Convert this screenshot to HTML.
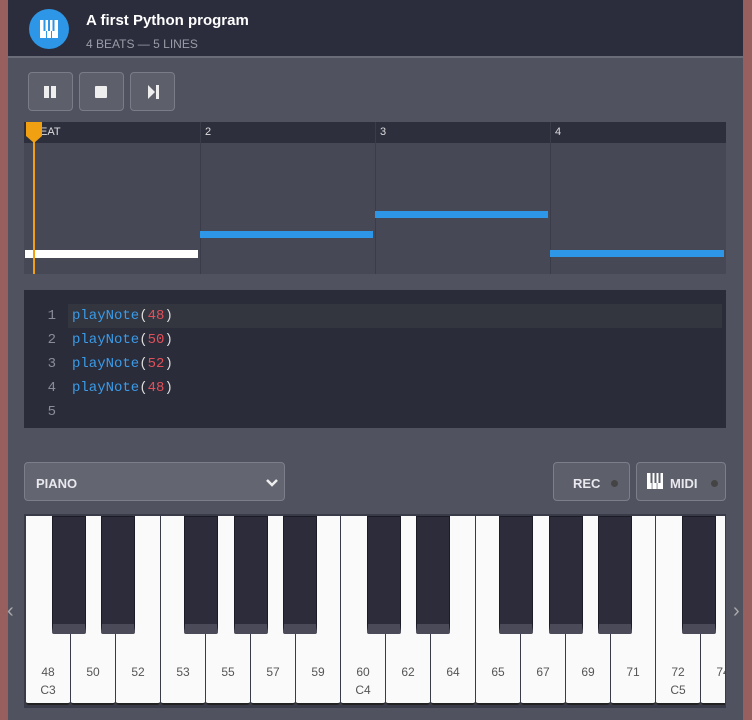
<!DOCTYPE html>
<html><head><meta charset="utf-8"><style>
*{margin:0;padding:0;box-sizing:border-box}
body{width:752px;height:720px;background:#50525f;font-family:"Liberation Sans",sans-serif;position:relative;overflow:hidden}
.a{position:absolute}
.btn{position:absolute;top:72px;width:45px;height:39px;border:1px solid #7a7c88;border-radius:4px;background:#5d5f6b}
.wk{position:absolute;top:516px;width:44px;height:189px;background:#fafafa;border-radius:0 0 3px 3px;border-bottom:2px solid #222;text-align:center;font-size:12px;color:#555;}
.wk span{position:absolute;left:0;right:0;top:147px;line-height:18px}
.bk{position:absolute;top:516px;width:34px;height:118px;background:#2d2c3b;border:1px solid #1c1c26;border-bottom:10px solid #4a4a58;border-radius:0 0 2px 2px}
.cl{position:absolute;left:0;width:100%;height:24px;line-height:24px;font-family:"Liberation Mono",monospace;font-size:14px}
.ln{position:absolute;left:18px;width:14px;text-align:right;color:#8a8c98}
.cd{position:absolute;left:48px;color:#3a9be8}
.n{color:#e0505a}.p{color:#ddd}
</style></head><body>
<div class="a" style="left:0;top:0;width:8px;height:720px;background:#985f5f"></div>
<div class="a" style="left:743px;top:0;width:9px;height:720px;background:#985f5f"></div>
<div class="a" style="left:8px;top:0;width:735px;height:58px;background:#2b2d3d;border-bottom:2px solid #6a6c78"></div>
<div class="a" style="left:29px;top:9px;width:40px;height:40px;border-radius:50%;background:#2d96e6">
<svg width="40" height="40"><rect x="11" y="11" width="18" height="18" fill="#fff"/><g fill="#2d96e6"><rect x="14.5" y="11" width="2" height="11"/><rect x="19" y="11" width="2" height="11"/><rect x="23.5" y="11" width="2" height="11"/><rect x="17" y="22" width="1" height="7"/><rect x="22" y="22" width="1" height="7"/></g></svg></div>
<div class="a" style="left:86px;top:12px;color:#fff;font-weight:bold;font-size:15px">A first Python program</div>
<div class="a" style="left:86px;top:37px;color:#9a9ca8;font-size:12px">4 BEATS — 5 LINES</div>
<div class="btn" style="left:28px"><div class="a" style="left:15px;top:13px;width:5px;height:12px;background:#eee"></div><div class="a" style="left:22px;top:13px;width:5px;height:12px;background:#eee"></div></div>
<div class="btn" style="left:79px"><div class="a" style="left:15px;top:13px;width:12px;height:12px;background:#eee;border-radius:1px"></div></div>
<div class="btn" style="left:130px"><svg class="a" style="left:17px;top:12px" width="12" height="14"><path d="M0 0L7 7L0 14Z" fill="#eee"/><rect x="8" y="0" width="3" height="14" fill="#eee"/></svg></div>
<div class="a" style="left:24px;top:122px;width:702px;height:152px;background:#464856">
<div class="a" style="left:0;top:0;width:702px;height:21px;background:#2d2f3d"></div>
<div class="a" style="left:176px;top:0;width:1px;height:152px;background:#3a3c4a"></div>
<div class="a" style="left:351px;top:0;width:1px;height:152px;background:#3a3c4a"></div>
<div class="a" style="left:526px;top:0;width:1px;height:152px;background:#3a3c4a"></div>
<div class="a" style="left:16px;top:4px;font-size:11px;color:#ddd">EAT</div>
<div class="a" style="left:181px;top:4px;font-size:11px;color:#ddd">2</div>
<div class="a" style="left:356px;top:4px;font-size:11px;color:#ddd">3</div>
<div class="a" style="left:531px;top:4px;font-size:11px;color:#ddd">4</div>
<div class="a" style="left:1px;top:128px;width:173px;height:8px;background:#fff"></div>
<div class="a" style="left:176px;top:109px;width:173px;height:7px;background:#2d96e6"></div>
<div class="a" style="left:351px;top:89px;width:173px;height:7px;background:#2d96e6"></div>
<div class="a" style="left:526px;top:128px;width:174px;height:7px;background:#2d96e6"></div>
<div class="a" style="left:9px;top:0;width:2px;height:152px;background:#f0a010"></div>
<svg class="a" style="left:2px;top:0" width="16" height="22"><path d="M0 0H16V14L8 21L0 14Z" fill="#f0a010"/></svg>
</div>
<div class="a" style="left:24px;top:290px;width:702px;height:138px;background:#2b2c3a">
<div class="a" style="left:44px;top:14px;width:654px;height:24px;background:#33353f"></div>
<div class="cl" style="top:14px"><span class="ln">1</span><span class="cd">playNote<span class="p">(</span><span class="n">48</span><span class="p">)</span></span></div>
<div class="cl" style="top:38px"><span class="ln">2</span><span class="cd">playNote<span class="p">(</span><span class="n">50</span><span class="p">)</span></span></div>
<div class="cl" style="top:62px"><span class="ln">3</span><span class="cd">playNote<span class="p">(</span><span class="n">52</span><span class="p">)</span></span></div>
<div class="cl" style="top:86px"><span class="ln">4</span><span class="cd">playNote<span class="p">(</span><span class="n">48</span><span class="p">)</span></span></div>
<div class="cl" style="top:110px"><span class="ln">5</span></div>
</div>
<div class="a" style="left:24px;top:462px;width:261px;height:39px;background:#636571;border:1px solid #7c7e8a;border-radius:4px">
<div class="a" style="left:11px;top:13px;font-size:13px;font-weight:bold;color:#e8e8ee">PIANO</div>
<svg class="a" style="left:241px;top:16px" width="12" height="8"><path d="M1 1L6 6L11 1" stroke="#eee" stroke-width="2.5" fill="none"/></svg></div>
<div class="a" style="left:553px;top:462px;width:77px;height:39px;background:#5d5f6b;border:1px solid #7c7e8a;border-radius:4px">
<div class="a" style="left:19px;top:13px;font-size:13px;font-weight:bold;color:#e8e8ee">REC</div>
<div class="a" style="left:57px;top:17px;width:7px;height:7px;border-radius:50%;background:#444"></div></div>
<div class="a" style="left:636px;top:462px;width:90px;height:39px;background:#5d5f6b;border:1px solid #7c7e8a;border-radius:4px">
<svg class="a" style="left:10px;top:10px" width="16" height="16"><rect width="16" height="16" fill="#fff"/><g fill="#5d5f6b"><rect x="3.5" y="0" width="2" height="10"/><rect x="7.5" y="0" width="2" height="10"/><rect x="11.5" y="0" width="2" height="10"/><rect x="4.7" y="10" width="0.7" height="6"/><rect x="9.7" y="10" width="0.7" height="6"/></g></svg>
<div class="a" style="left:33px;top:13px;font-size:13px;font-weight:bold;color:#e8e8ee">MIDI</div>
<div class="a" style="left:74px;top:17px;width:7px;height:7px;border-radius:50%;background:#444"></div></div>
<div class="a" style="left:24px;top:514px;width:702px;height:194px;background:#3a3b48;overflow:hidden">
</div>
<div class="a" style="left:25px;top:516px;width:700px;height:191px;overflow:hidden">
<div style="position:absolute;left:-25px;top:-516px;width:752px;height:720px">
<div class="wk" style="left:26px"><span>48<br>C3</span></div>
<div class="wk" style="left:71px"><span>50</span></div>
<div class="wk" style="left:116px"><span>52</span></div>
<div class="wk" style="left:161px"><span>53</span></div>
<div class="wk" style="left:206px"><span>55</span></div>
<div class="wk" style="left:251px"><span>57</span></div>
<div class="wk" style="left:296px"><span>59</span></div>
<div class="wk" style="left:341px"><span>60<br>C4</span></div>
<div class="wk" style="left:386px"><span>62</span></div>
<div class="wk" style="left:431px"><span>64</span></div>
<div class="wk" style="left:476px"><span>65</span></div>
<div class="wk" style="left:521px"><span>67</span></div>
<div class="wk" style="left:566px"><span>69</span></div>
<div class="wk" style="left:611px"><span>71</span></div>
<div class="wk" style="left:656px"><span>72<br>C5</span></div>
<div class="wk" style="left:701px"><span>74</span></div>
<div class="bk" style="left:52px"></div><div class="bk" style="left:101px"></div>
<div class="bk" style="left:184px"></div><div class="bk" style="left:234px"></div><div class="bk" style="left:283px"></div>
<div class="bk" style="left:367px"></div><div class="bk" style="left:416px"></div>
<div class="bk" style="left:499px"></div><div class="bk" style="left:549px"></div><div class="bk" style="left:598px"></div>
<div class="bk" style="left:682px"></div>
</div></div>
<div class="a" style="left:7px;top:600px;font-size:20px;color:#aaa">‹</div>
<div class="a" style="left:733px;top:600px;font-size:20px;color:#aaa">›</div>
</body></html>
